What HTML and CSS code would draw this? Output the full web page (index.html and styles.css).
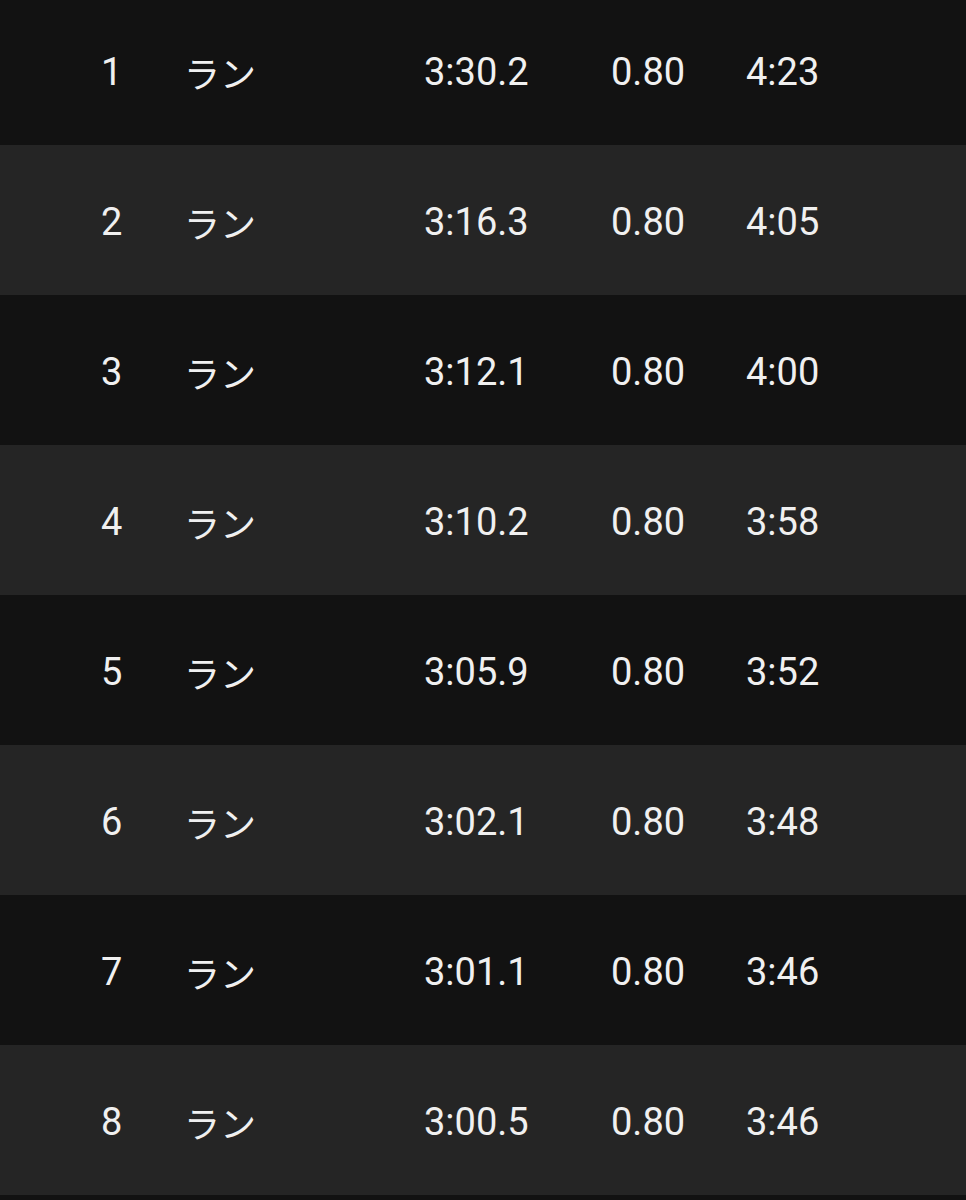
FILE: index.html
```html
<!DOCTYPE html>
<html lang="ja">
<head>
<meta charset="utf-8">
<link rel="stylesheet" href="styles.css">
</head>
<body>
<div class="laps">
  <div class="lap"><span>1</span><span class="jp">ラン</span><span>3:30.2</span><span>0.80</span><span>4:23</span></div>
  <div class="lap"><span>2</span><span class="jp">ラン</span><span>3:16.3</span><span>0.80</span><span>4:05</span></div>
  <div class="lap"><span>3</span><span class="jp">ラン</span><span>3:12.1</span><span>0.80</span><span>4:00</span></div>
  <div class="lap"><span>4</span><span class="jp">ラン</span><span>3:10.2</span><span>0.80</span><span>3:58</span></div>
  <div class="lap"><span>5</span><span class="jp">ラン</span><span>3:05.9</span><span>0.80</span><span>3:52</span></div>
  <div class="lap"><span>6</span><span class="jp">ラン</span><span>3:02.1</span><span>0.80</span><span>3:48</span></div>
  <div class="lap"><span>7</span><span class="jp">ラン</span><span>3:01.1</span><span>0.80</span><span>3:46</span></div>
  <div class="lap"><span>8</span><span class="jp">ラン</span><span>3:00.5</span><span>0.80</span><span>3:46</span></div>
</div>
</body>
</html>
```

FILE: styles.css
```css
html, body {
  margin: 0;
  padding: 0;
  background: #121212;
}
.laps {
  margin-top: -5px;
  font-family: Roboto, "Noto Sans CJK JP", sans-serif;
  font-size: 38px;
  color: #f0f0f0;
}
.lap {
  height: 150px;
  box-sizing: border-box;
  display: grid;
  grid-template-columns: 83px 240px 187px 135px auto;
  align-items: center;
  padding-left: 101px;
  padding-top: 3px;
  background: #121212;
}
.lap:nth-child(even) {
  background: #252525;
}
.jp {
  font-family: "Noto Sans CJK JP", sans-serif;
  font-size: 36px;
}
```
